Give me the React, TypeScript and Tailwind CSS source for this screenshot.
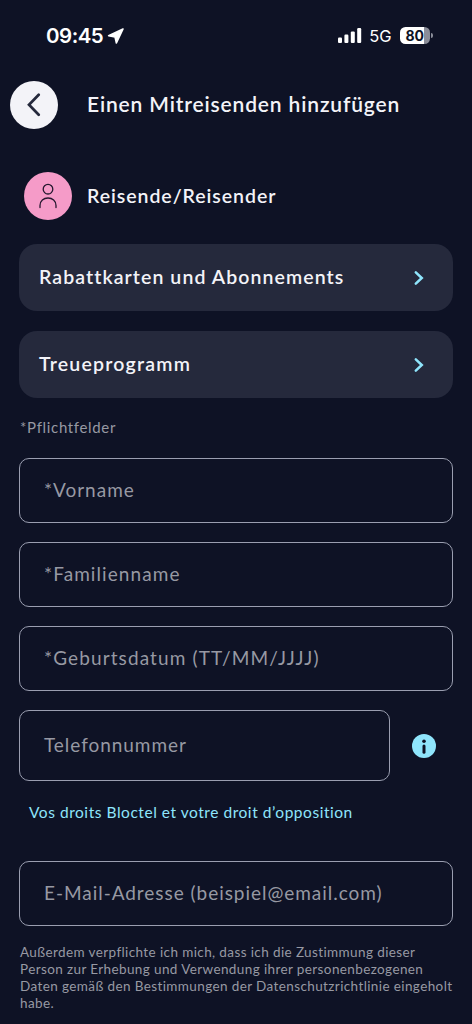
type FieldProps = { label: string; tracking: string; className?: string };

function Field({ label, tracking, className = "h-[65px]" }: FieldProps) {
  return (
    <div
      className={`flex items-center rounded-[10px] border-[1.5px] border-[#9a9eb0] pl-[24px] text-[19px] text-[#9799a3] ${tracking} ${className}`}
    >
      <span>{label}</span>
    </div>
  );
}

function Card({ label, tracking }: { label: string; tracking: string }) {
  return (
    <button
      type="button"
      className={`flex h-[67px] w-full items-center justify-between rounded-[18px] bg-[#25293c] pr-[28px] pl-[20px] text-[19.5px] font-semibold text-[#f3f3f8] ${tracking}`}
    >
      <span className="pb-[2px]">{label}</span>
      <svg width="12" height="16" viewBox="0 0 12 16" fill="none" stroke="#8fe5fc" strokeWidth="2.5" strokeLinecap="round" strokeLinejoin="miter">
        <path d="M2.8 2.3L8.8 8L2.8 13.7" />
      </svg>
    </button>
  );
}

function StatusBar() {
  return (
    <div className="flex h-[71px] items-center justify-between pr-[39px] pl-[46px] font-['Inter',sans-serif] text-white">
      <div className="flex items-center gap-[4px]">
        <span className="pt-px text-[20.5px] font-semibold tracking-[-0.5px]">09:45</span>
        <svg width="18" height="18" viewBox="0 0 18 18" fill="#fff" stroke="#fff" strokeWidth="1.6" strokeLinejoin="round">
          <path d="M16 2L1.6 8.7L8 9.9L9.4 16Z" />
        </svg>
      </div>
      <div className="flex items-center">
        <svg width="24" height="16" viewBox="0 0 24 16" fill="#fff">
          <rect x="0" y="9.4" width="4" height="5.6" rx="1.1" />
          <rect x="6.4" y="6.6" width="4" height="8.4" rx="1.1" />
          <rect x="12.8" y="3.4" width="4" height="11.6" rx="1.1" />
          <rect x="19.2" y="0.1" width="4" height="14.9" rx="1.1" />
        </svg>
        <span className="ml-[7px] pt-px text-[16.5px]">5G</span>
        <div className="ml-[8px] flex h-[17px] w-[30.5px] items-center rounded-[5.5px] bg-[linear-gradient(to_right,#fff_80%,#8a8d99_80%)] pl-[6px]">
          <span className="pt-px text-[14px] leading-none font-bold tracking-[-0.2px] text-[#0e1225]">80</span>
        </div>
        <div className="ml-[1px] h-[5px] w-[2px] rounded-r-full bg-[#8a8d99]" />
      </div>
    </div>
  );
}

export default function App() {
  return (
    <div className="h-[1024px] w-[472px] overflow-hidden bg-[#0e1225] font-['Lato',sans-serif]">
      <StatusBar />

      <header className="mt-[9px] flex h-[49px] items-center pl-[10px]">
        <button type="button" className="flex size-[48px] items-center justify-center rounded-full bg-[#f3f3f8]">
          <svg width="16" height="24" viewBox="0 0 16 24" fill="none" stroke="#25293c" strokeWidth="2.7" strokeLinecap="round" strokeLinejoin="miter">
            <path d="M12.7 1.8L3 11.8L12.7 21.8" />
          </svg>
        </button>
        <h1 className="ml-[29px] pb-[2px] text-[21px] font-semibold tracking-[0.85px] text-[#f3f3f8]">
          Einen Mitreisenden hinzufügen
        </h1>
      </header>

      <div className="mt-[43px] flex h-[48px] items-center pl-[24px]">
        <div className="flex size-[48px] items-center justify-center rounded-full bg-[#f59bc8]">
          <svg width="18" height="26" viewBox="0 0 18 26" fill="none" stroke="#25182f" strokeWidth="1.3" strokeLinecap="round">
            <circle cx="9" cy="6.2" r="4.8" />
            <path d="M1 24.5V22.5C1 17.8 4.6 15 9 15S17 17.8 17 22.5V24.5" />
          </svg>
        </div>
        <h2 className="ml-[15px] pb-px text-[19.5px] font-semibold tracking-[0.95px] text-[#f3f3f8]">Reisende/Reisender</h2>
      </div>

      <main className="mt-[24px] pr-[19px] pl-[19px]">
        <div className="flex flex-col gap-[20px]">
          <Card label="Rabattkarten und Abonnements" tracking="tracking-[1.08px]" />
          <Card label="Treueprogramm" tracking="tracking-[1.2px]" />
        </div>

        <p className="mt-[19px] pl-px text-[15px] leading-[20px] tracking-[0.66px] text-[#9799a3]">*Pflichtfelder</p>

        <div className="mt-[21px] flex flex-col gap-[19px]">
          <Field label="*Vorname" tracking="tracking-[0.98px]" />
          <Field label="*Familienname" tracking="tracking-[1.08px]" />
          <Field label="*Geburtsdatum (TT/MM/JJJJ)" tracking="tracking-[1.11px]" />
          <div className="flex items-center">
            <Field label="Telefonnummer" tracking="tracking-[0.95px]" className="h-[71px] w-[371px]" />
            <svg className="ml-[22px]" width="24" height="24" viewBox="0 0 24 24">
              <circle cx="12" cy="12" r="12" fill="#8fe5fc" />
              <circle cx="12" cy="7.2" r="1.8" fill="#0e1225" />
              <rect x="10.5" y="10.6" width="3" height="9.2" rx="1.5" fill="#0e1225" />
            </svg>
          </div>
        </div>

        <a className="mt-[21px] block pl-[10px] text-[15.5px] leading-[20px] tracking-[0.54px] text-[#8fe5fc]">
          Vos droits Bloctel et votre droit d’opposition
        </a>

        <div className="mt-[39px]">
          <Field label="E-Mail-Adresse (beispiel@email.com)" tracking="tracking-[0.96px]" />
        </div>

        <p className="mt-[18px] pl-px text-[13.5px] leading-[17px] tracking-[0.39px] whitespace-nowrap text-[#9799a3]">
          Außerdem verpflichte ich mich, dass ich die Zustimmung dieser
          <br />
          Person zur Erhebung und Verwendung ihrer personenbezogenen
          <br />
          Daten gemäß den Bestimmungen der Datenschutzrichtlinie eingeholt
          <br />
          habe.
        </p>
      </main>
    </div>
  );
}
